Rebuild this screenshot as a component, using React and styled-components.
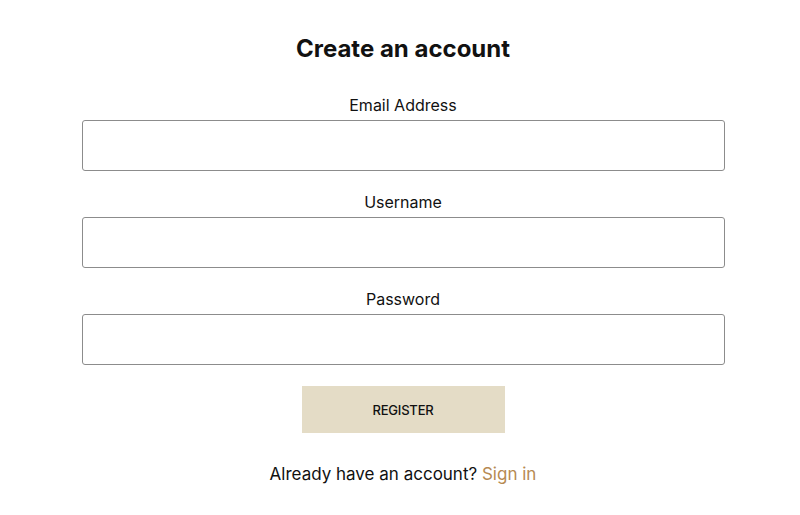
import React from 'react';
import styled, { createGlobalStyle } from 'styled-components';

const GlobalStyle = createGlobalStyle`
    body {
        margin: 0;
        background: #ffffff;
        font-family: Inter, "Open Sans", sans-serif;
        color: #111111;
    }
`;

const Page = styled.div`
    display: flex;
    justify-content: center;
    padding: 31px 0 0 6px;
`;

const Form = styled.form`
    width: 643px;
    display: flex;
    flex-direction: column;
    align-items: center;
`;

const Title = styled.h1`
    margin: 0 0 27px;
    font-size: 24px;
    font-weight: 700;
    line-height: 36px;
    letter-spacing: 0;
`;

const Field = styled.div`
    width: 100%;
    display: flex;
    flex-direction: column;
    align-items: center;
    margin-bottom: 20px;
`;

const Label = styled.label`
    font-size: 16px;
    line-height: 22px;
    margin-bottom: 4px;
`;

const Input = styled.input`
    box-sizing: border-box;
    width: 100%;
    height: 51px;
    border: 1px solid #8c8c8c;
    border-radius: 3px;
    padding: 0 12px;
    font-size: 16px;
    font-family: inherit;
    outline: none;
`;

const Button = styled.button`
    margin-top: 1px;
    width: 203px;
    height: 47px;
    border: none;
    background: #e4dcc6;
    color: #111111;
    font-family: Inter, "Liberation Sans", sans-serif;
    font-size: 13px;
    font-weight: 500;
    letter-spacing: -0.2px;
    cursor: pointer;
`;

const Footer = styled.p`
    margin: 30px 0 0;
    font-size: 17px;
    line-height: 22px;
`;

const SignIn = styled.a`
    color: #b68a52;
    text-decoration: none;
`;

const fields = [
    { id: 'email', label: 'Email Address', type: 'email' },
    { id: 'username', label: 'Username', type: 'text' },
    { id: 'password', label: 'Password', type: 'password' },
];

const App = () => {
    return (
        <Page>
            <GlobalStyle />
            <Form onSubmit={e => e.preventDefault()}>
                <Title>Create an account</Title>
                {fields.map(f => (
                    <Field key={f.id}>
                        <Label htmlFor={f.id}>{f.label}</Label>
                        <Input id={f.id} type={f.type} />
                    </Field>
                ))}
                <Button type="submit">REGISTER</Button>
                <Footer>
                    Already have an account? <SignIn href="#">Sign in</SignIn>
                </Footer>
            </Form>
        </Page>
    );
};

export default App;
